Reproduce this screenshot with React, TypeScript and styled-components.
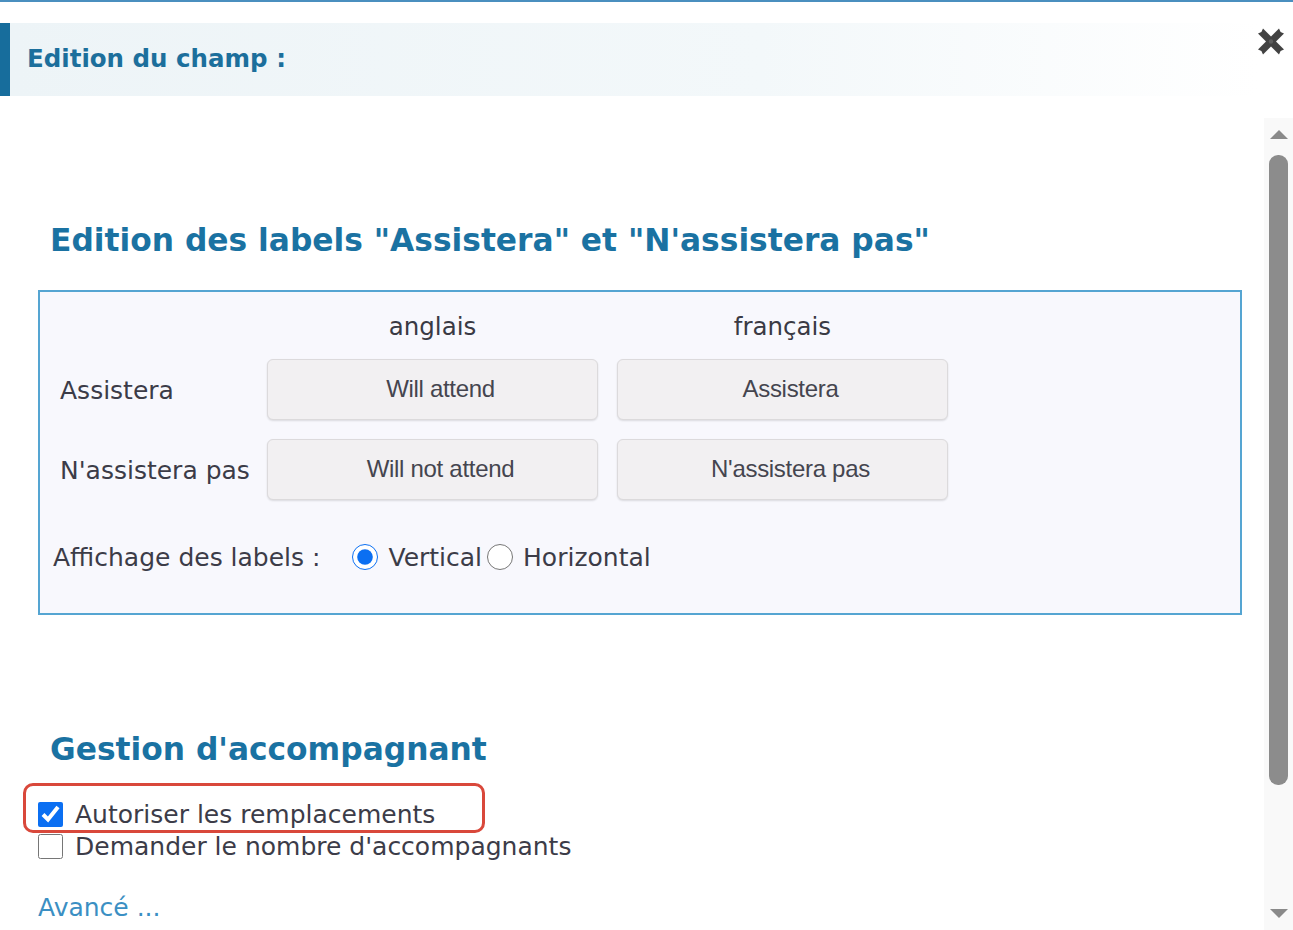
import React from 'react';
import styled, { createGlobalStyle } from 'styled-components';

const GlobalStyle = createGlobalStyle`
  html, body {
    margin: 0;
    padding: 0;
    background: #fff;
  }
  body {
    font-family: 'DejaVu Sans', Verdana, sans-serif;
    color: #3c3c48;
  }
`;

type LabelRow = {
  label: string;
  en: string;
  fr: string;
};

const rows: LabelRow[] = [
  { label: 'Assistera', en: 'Will attend', fr: 'Assistera' },
  { label: "N'assistera pas", en: 'Will not attend', fr: "N'assistera pas" },
];

const App: React.FC = () => {
  return (
    <Page>
      <GlobalStyle />
      <HeaderRow>
        <TitleBar>Edition du champ :</TitleBar>
        <CloseButton aria-label="Fermer">
          <svg width="26" height="27" viewBox="0 0 26 26">
            <path
              fill="#424242"
              d="M5 0 L13 8 L21 0 L22.6 3.4 L26 5 L18 13 L26 21 L22.6 22.6 L21 26 L13 18 L5 26 L3.4 22.6 L0 21 L8 13 L0 5 L3.4 3.4 Z"
            />
            <circle cx="13" cy="13" r="2.2" fill="#5e5e5e" />
          </svg>
        </CloseButton>
      </HeaderRow>

      <BodyRow>
        <Main>
          <SectionTitle>Edition des labels "Assistera" et "N'assistera pas"</SectionTitle>
          <LabelsBox>
            <LabelsGrid>
              <span />
              <ColHead>anglais</ColHead>
              <ColHead>français</ColHead>
              {rows.map(r => (
                <React.Fragment key={r.label}>
                  <RowLabel>{r.label}</RowLabel>
                  <LabelInput defaultValue={r.en} />
                  <LabelInput defaultValue={r.fr} />
                </React.Fragment>
              ))}
            </LabelsGrid>
            <RadioRow>
              <RadioCaption>Affichage des labels :</RadioCaption>
              <RadioOption>
                <Radio type="radio" name="display" defaultChecked />
                Vertical
              </RadioOption>
              <RadioOption>
                <Radio type="radio" name="display" />
                Horizontal
              </RadioOption>
            </RadioRow>
          </LabelsBox>

          <SectionTitle $top={116}>Gestion d'accompagnant</SectionTitle>
          <CheckList>
            <CheckRow>
              <Highlight />
              <Check type="checkbox" defaultChecked />
              Autoriser les remplacements
            </CheckRow>
            <CheckRow>
              <Check type="checkbox" />
              Demander le nombre d'accompagnants
            </CheckRow>
          </CheckList>
          <MoreLink href="#">Avancé ...</MoreLink>
        </Main>

        <ScrollTrack>
          <Arrow $dir="up" />
          <Thumb />
          <Arrow $dir="down" />
        </ScrollTrack>
      </BodyRow>
    </Page>
  );
};

const Page = styled.div`
  width: 1293px;
  height: 930px;
  overflow: hidden;
  border-top: 2px solid #4a8fbf;
  box-sizing: border-box;
  display: flex;
  flex-flow: column;
`;

const HeaderRow = styled.div`
  display: flex;
  flex-flow: row;
  align-items: flex-start;
  margin-top: 21px;
`;

const TitleBar = styled.div`
  flex: 1;
  height: 73px;
  box-sizing: border-box;
  border-left: 10px solid #176d9c;
  background: linear-gradient(to right, #edf4f7 0%, #f3f8fa 60%, #ffffff 100%);
  display: flex;
  align-items: center;
  padding-left: 17px;
  padding-bottom: 2px;
  font-weight: bold;
  font-size: 24.5px;
  color: #1c6f9c;
`;

const CloseButton = styled.button`
  width: 35px;
  margin-top: 5px;
  padding: 0;
  border: none;
  background: none;
  cursor: pointer;
  display: flex;
  justify-content: flex-start;
  svg {
    display: block;
  }
`;

const BodyRow = styled.div`
  display: flex;
  flex-flow: row;
  flex: 1;
  margin-top: 22px;
  min-height: 0;
`;

const Main = styled.div`
  flex: 1;
  padding: 0 22px 0 38px;
  display: flex;
  flex-flow: column;
  align-items: flex-start;
`;

const SectionTitle = styled.h2<{ $top?: number }>`
  margin: ${p => p.$top ?? 104}px 0 0 12px;
  font-size: 31.3px;
  line-height: 36px;
  font-weight: bold;
  color: #1a72a2;
`;

const LabelsBox = styled.div`
  align-self: stretch;
  margin-top: 32px;
  height: 325px;
  box-sizing: border-box;
  border: 2px solid #55a5d2;
  background: #f8f8fd;
  padding: 20px 0 0 20px;
`;

const LabelsGrid = styled.div`
  display: grid;
  grid-template-columns: 188px 331px 331px;
  grid-template-rows: 28px 61px 61px;
  column-gap: 19px;
  row-gap: 19px;
  align-items: center;
  font-size: 25px;
`;

const ColHead = styled.div`
  text-align: center;
  font-size: 24.5px;
  color: #3a3a44;
`;

const RowLabel = styled.div`
  color: #3c3c48;
  padding-top: 2px;
  white-space: nowrap;
`;

const LabelInput = styled.input`
  height: 61px;
  box-sizing: border-box;
  width: 100%;
  border: 1px solid #dcdadc;
  border-radius: 6px;
  background: #f2f0f2;
  box-shadow: 0 1px 2px rgba(0, 0, 0, 0.12);
  padding: 0 0 2px 16px;
  text-align: center;
  font-family: 'Liberation Sans', Arial, sans-serif;
  font-size: 24px;
  letter-spacing: -0.3px;
  color: #45454f;
  outline: none;
`;

const RadioRow = styled.div`
  display: flex;
  flex-flow: row;
  align-items: center;
  margin: 42px 0 0 -7px;
  height: 30px;
  font-size: 25px;
`;

const RadioCaption = styled.span`
  margin-right: 32px;
`;

const RadioOption = styled.label`
  display: inline-flex;
  align-items: center;
  gap: 10px;
  margin-right: 5px;
  cursor: pointer;
`;

const Radio = styled.input`
  width: 26px;
  height: 26px;
  margin: 0;
  accent-color: #0b6ff2;
`;

const CheckList = styled.div`
  margin-top: 31px;
  display: flex;
  flex-flow: column;
  font-size: 25px;
`;

const CheckRow = styled.label`
  position: relative;
  display: flex;
  align-items: center;
  gap: 12px;
  height: 32px;
  cursor: pointer;
`;

const Check = styled.input`
  width: 25px;
  height: 25px;
  margin: 0;
  accent-color: #0b6ff2;
`;

const Highlight = styled.span`
  position: absolute;
  left: -15px;
  top: -15px;
  width: 462px;
  height: 50px;
  box-sizing: border-box;
  border: 3px solid #d9483b;
  border-radius: 10px;
  pointer-events: none;
`;

const MoreLink = styled.a`
  margin-top: 30px;
  line-height: 32px;
  font-size: 25px;
  color: #3b8fc3;
  text-decoration: none;
`;

const ScrollTrack = styled.div`
  width: 29px;
  background: #f9f9f9;
  display: flex;
  flex-flow: column;
  align-items: center;
  padding-top: 12px;
  padding-bottom: 12px;
  box-sizing: border-box;
`;

const Arrow = styled.div<{ $dir: 'up' | 'down' }>`
  width: 0;
  height: 0;
  border-left: 9px solid transparent;
  border-right: 9px solid transparent;
  ${p =>
    p.$dir === 'up'
      ? 'border-bottom: 9px solid #8a8a8a;'
      : 'border-top: 9px solid #8a8a8a; margin-top: auto;'}
`;

const Thumb = styled.div`
  width: 19px;
  height: 630px;
  margin-top: 16px;
  border-radius: 9px;
  background: #8c8c8c;
`;

export default App;
